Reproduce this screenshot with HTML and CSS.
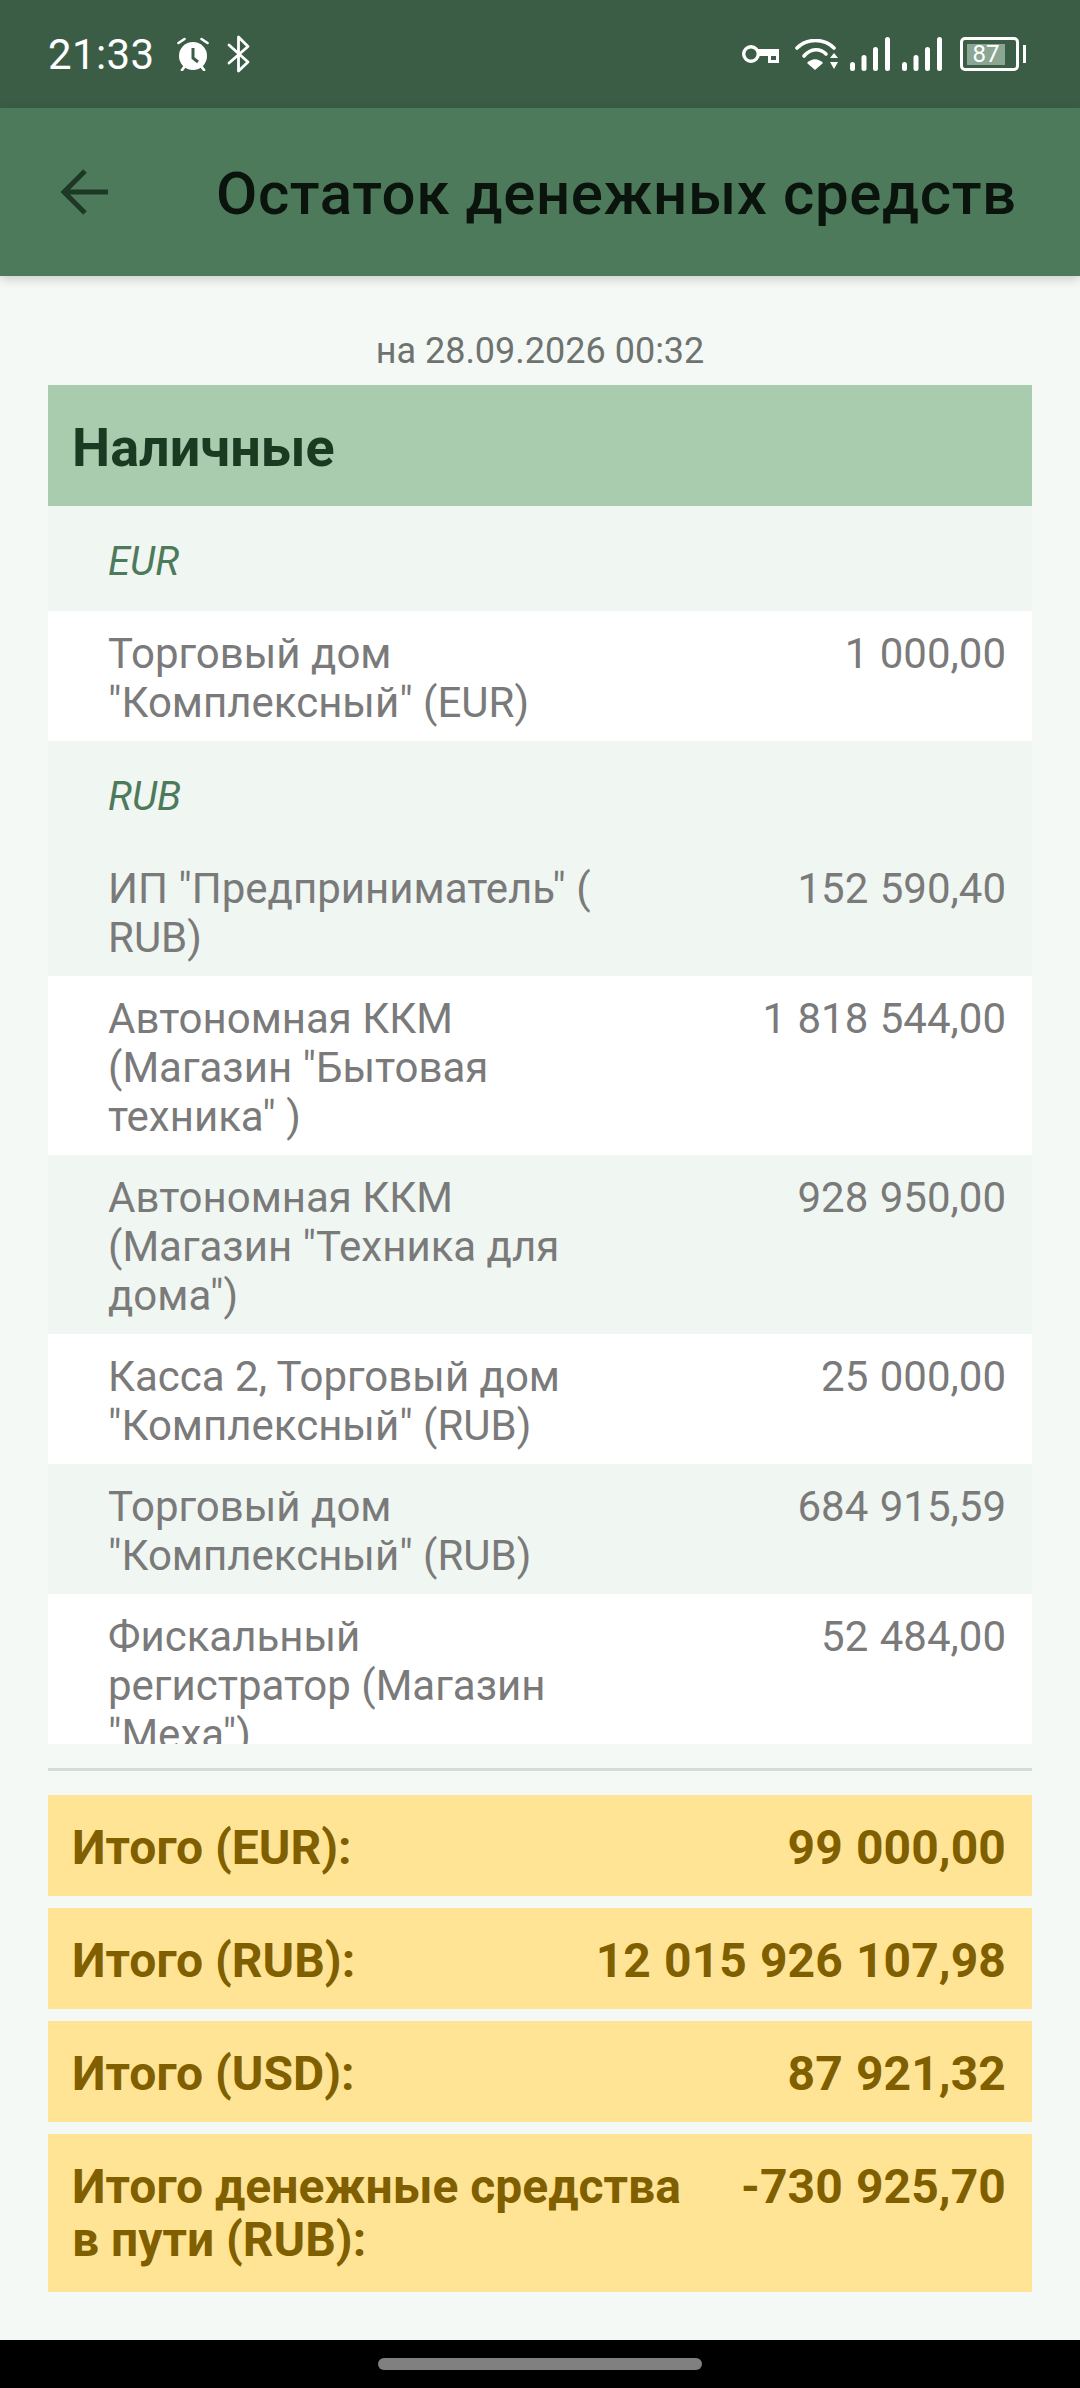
FILE: index.html
```html
<!DOCTYPE html>
<html lang="ru">
<head>
	<meta charset="UTF-8">
	<meta name="viewport" content="width=device-width, initial-scale=1.0">
	<title>Остаток денежных средств</title>
	<link rel="stylesheet" href="styles.css">
</head>
<body>
	<div class="screen">
		<div class="status-bar">
			<span class="clock">21:33</span>
			<svg class="ico-alarm" viewBox="0 0 32 34" width="32" height="34">
				<path d="M1.500 6 7.500 2M30.500 6 24.500 2" stroke="#fff" stroke-width="2.600" fill="none" stroke-linecap="round"/>
				<path d="M8 29 5 33M24 29 27 33" stroke="#fff" stroke-width="2.800" fill="none" stroke-linecap="round"/>
				<circle cx="16" cy="19" r="14" fill="#fff"/>
				<path d="M16 11V21L21 25" stroke="#3b5d45" stroke-width="3" fill="none"/>
			</svg>
			<svg class="ico-bt" viewBox="0 0 23 38" width="23" height="38">
				<path d="M2 28 21 11.500 11.500 2V36L21 27 2 10" stroke="#fff" stroke-width="2.800" fill="none" stroke-linejoin="round" stroke-linecap="round"/>
			</svg>
			<div class="status-right">
				<svg class="ico-key" viewBox="0 0 38 22" width="38" height="22">
					<circle cx="9" cy="11" r="7.300" stroke="#fff" stroke-width="3.400" fill="none"/>
					<path d="M16 6H37V20H26V13H16Z" fill="#fff"/>
					<rect x="29" y="13" width="5" height="4" fill="#3b5d45"/>
				</svg>
				<svg class="ico-wifi" viewBox="0 0 43 31" width="43" height="31">
					<path d="M2 9C12 -1 29 -1 39 9" stroke="#fff" stroke-width="3.600" fill="none" stroke-linecap="round"/>
					<path d="M9 17C16 9 25 9 31 15" stroke="#fff" stroke-width="3.600" fill="none" stroke-linecap="round"/>
					<path d="M12 24 20 31 28 24C23 19 17 19 12 24Z" fill="#fff"/>
					<path d="M35 19 39 14 43 19ZM35 23H43L39 30Z" fill="#fff"/>
				</svg>
				<svg class="ico-signal" viewBox="0 0 40 34" width="40" height="34">
					<rect x="0" y="25" width="5" height="9" rx="2.500" fill="#fff"/>
					<rect x="11.500" y="18" width="5" height="16" rx="2.500" fill="#fff"/>
					<rect x="23" y="10" width="5" height="24" rx="2.500" fill="#fff"/>
					<rect x="35" y="0" width="5" height="34" rx="2.500" fill="#fff"/>
				</svg>
				<svg class="ico-signal" viewBox="0 0 40 34" width="40" height="34">
					<rect x="0" y="25" width="5" height="9" rx="2.500" fill="#fff"/>
					<rect x="11.500" y="18" width="5" height="16" rx="2.500" fill="#fff"/>
					<rect x="23" y="10" width="5" height="24" rx="2.500" fill="#fff"/>
					<rect x="35" y="0" width="5" height="34" rx="2.500" fill="#fff"/>
				</svg>
				<div class="battery">
					<div class="battery-body"><span class="battery-level">87</span></div>
					<div class="battery-cap"></div>
				</div>
			</div>
		</div>

		<header class="app-bar">
			<svg class="ico-back" viewBox="0 0 48 48" width="48" height="48">
				<path d="M48 24H4M25 3 4 24 25 45" stroke="#1f3826" stroke-width="5" fill="none"/>
			</svg>
			<h1 class="app-title">Остаток денежных средств</h1>
		</header>

		<main class="content">
			<p class="date">на 28.09.2026 00:32</p>

			<div class="list">
				<div class="list-head">Наличные</div>
				<div class="group">EUR</div>
				<div class="row white">
					<span class="row-name">Торговый дом "Комплексный" (EUR)</span>
					<span class="row-sum">1 000,00</span>
				</div>
				<div class="group">RUB</div>
				<div class="row tint">
					<span class="row-name">ИП "Предприниматель" ( RUB)</span>
					<span class="row-sum">152 590,40</span>
				</div>
				<div class="row white">
					<span class="row-name">Автономная ККМ (Магазин "Бытовая техника" )</span>
					<span class="row-sum">1 818 544,00</span>
				</div>
				<div class="row tint">
					<span class="row-name">Автономная ККМ (Магазин "Техника для дома")</span>
					<span class="row-sum">928 950,00</span>
				</div>
				<div class="row white">
					<span class="row-name">Касса 2, Торговый дом "Комплексный" (RUB)</span>
					<span class="row-sum">25 000,00</span>
				</div>
				<div class="row tint">
					<span class="row-name">Торговый дом "Комплексный" (RUB)</span>
					<span class="row-sum">684 915,59</span>
				</div>
				<div class="row white">
					<span class="row-name">Фискальный регистратор (Магазин "Меха")</span>
					<span class="row-sum">52 484,00</span>
				</div>
			</div>

			<div class="totals">
				<div class="total"><span>Итого (EUR):</span><span class="total-sum">99 000,00</span></div>
				<div class="total"><span>Итого (RUB):</span><span class="total-sum">12 015 926 107,98</span></div>
				<div class="total"><span>Итого (USD):</span><span class="total-sum">87 921,32</span></div>
				<div class="total"><span class="total-name">Итого денежные средства в пути (RUB):</span><span class="total-sum">-730 925,70</span></div>
			</div>
		</main>

		<div class="nav-bar"><div class="nav-pill"></div></div>
	</div>
</body>
</html>
```

FILE: styles.css
```css
html, body{margin: 0; padding: 0;}
body{font-family: Roboto, "Noto Sans", sans-serif; background: #f4f9f6;}
.screen{width: 1080px; height: 2388px; display: flex; flex-direction: column; overflow: hidden;}

.status-bar{
	height: 108px; background: #3b5d45; color: #fff; flex: none;
	display: flex; align-items: center; padding: 0 54px 0 48px; box-sizing: border-box;
}
.clock{font-size: 42px; letter-spacing: .4px; width: 129px;}
.ico-bt{margin-left: 18px;}
.status-right{margin-left: auto; display: flex; align-items: center; gap: 12px;}
.ico-key{margin-right: 3px;}
.battery{display: flex; align-items: center; gap: 4px; margin-left: 6px;}
.battery-body{
	width: 59px; height: 34px; border: 3px solid #fff; border-radius: 5px;
	padding: 4px 11px 3px 4px; box-sizing: border-box;
}
.battery-level{
	display: block; height: 100%; background: #8ba693; color: #fff;
	font-size: 24px; line-height: 21px; text-align: center;
}
.battery-cap{width: 3px; height: 18px; background: #fff;}

.app-bar{
	height: 168px; background: #4e7a5c; flex: none; display: flex; align-items: center;
	box-sizing: border-box; padding: 2px 0 0 60px; position: relative;
	box-shadow: 0 3px 10px rgba(0,0,0,.18);
}
.ico-back{margin-top: -2px;}
.app-title{margin: 0 0 0 108px; font-size: 60px; font-weight: 500; color: #0b130d; letter-spacing: .6px;}

.content{flex: 1; display: flex; flex-direction: column; padding: 0 48px 48px; min-height: 0;}
.date{margin: 0; height: 109px; line-height: 150px; text-align: center; font-size: 36px; color: #6e736f; flex: none;}

.list{height: 1359px; overflow: hidden; flex: none;}
.list-head{
	height: 121px; line-height: 125px; background: #a9ccaf; color: #1b3a22;
	font-size: 54px; font-weight: 700; padding-left: 24px;
}
.group{
	height: 105px; line-height: 111px; background: #f0f6f1; color: #4e7a5c;
	font-size: 40px; font-style: italic; padding-left: 60px;
}
.row{
	display: flex; justify-content: space-between; padding: 18px 26px 14px 60px;
	font-size: 42px; line-height: 49px; color: #7a7a7a;
}
.row.white{background: #fff;}
.row.tint{background: #f0f6f1;}
.row-name{width: 490px;}
.row-sum{word-spacing: 1px;}

.totals{border-top: 3px solid #d4dcd7; margin-top: 24px; padding-top: 24px; display: flex; flex-direction: column; gap: 12px;}
.total{
	background: #ffe496; color: #7f5f00; font-size: 48px; font-weight: 700; line-height: 53px;
	display: flex; justify-content: space-between; padding: 26px 26px 22px 24px;
}
.total:last-child{padding: 26px 26px 26px 24px;}
.total-name{width: 620px;}
.total-sum{word-spacing: 1px; letter-spacing: .1px;}

.nav-bar{height: 48px; background: #000; flex: none; display: flex; align-items: center; justify-content: center;}
.nav-pill{width: 324px; height: 12px; border-radius: 6px; background: #808080;}
```
